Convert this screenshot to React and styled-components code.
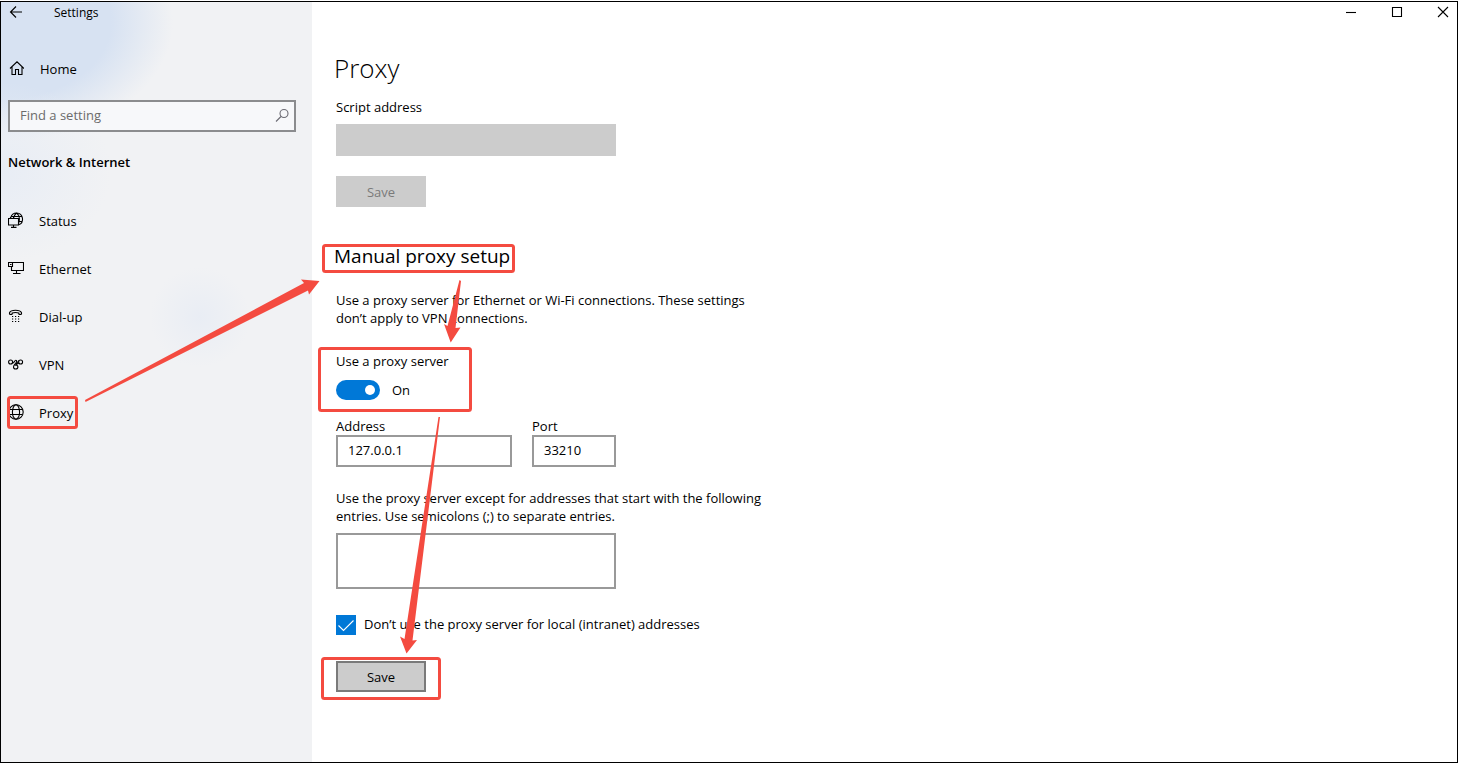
import React from 'react';
import styled, { createGlobalStyle, css } from 'styled-components';

const GlobalStyle = createGlobalStyle`
  * { box-sizing: border-box; }
  body {
    margin: 0;
    padding: 1px 0;
    background: #fff;
    color: #000;
    font: 13px/18px "Open Sans", "Noto Sans", sans-serif;
  }
  button, input, textarea { font: inherit; color: inherit; border-radius: 0; }
  h1, h2, p { margin: 0; }
`;

const Window = styled.div`
  position: relative;
  display: grid;
  grid-template-columns: 311px minmax(0, 1fr);
  min-height: calc(100vh - 2px);
  border: 1px solid #000;
`;

const Sidebar = styled.aside`
  padding: 0 16px 0 7px;
  background:
    radial-gradient(ellipse 50px 50px at 199px 315px, #e9edf4, transparent),
    radial-gradient(ellipse 110px 90px at 0 170px, #e8edf5, transparent),
    radial-gradient(ellipse 172px 120px at 0 20px, #d7e2f2 64%, transparent),
    #f1f2f4;
`;

const TitleBar = styled.header`
  display: flex;
  align-items: flex-start;
  height: 22px;
  font-size: 12px;
  line-height: 22px;
`;

const IconButton = styled.button`
  display: flex;
  align-items: center;
  justify-content: center;
  width: ${(p) => p.$width}px;
  height: 20px;
  padding: 0;
  border: 0;
  background: none;
`;

const AppName = styled.span`
  margin-left: 30px;
`;

const NavLink = styled.a`
  display: flex;
  align-items: center;
  gap: 15px;
  height: 48px;
  color: inherit;
  text-decoration: none;
  > svg { margin-bottom: 2px; }
`;

const HomeLink = styled(NavLink)`
  gap: 16px;
  margin-top: 21px;
`;

const SearchBox = styled.label`
  display: flex;
  align-items: center;
  height: 32px;
  margin-top: 7px;
  padding: 0 4px 2px 10px;
  border: 2px solid #8b8c8e;
  background: #f7f8fa;
`;

const SearchInput = styled.input`
  flex: 1;
  min-width: 0;
  padding: 0;
  border: 0;
  outline: 0;
  background: none;
  &::placeholder { color: #6b6b6b; opacity: 1; }
`;

const Category = styled.h2`
  margin-top: 21px;
  font-size: 13px;
  line-height: 18px;
  font-weight: 600;
`;

const NavList = styled.nav`
  margin-top: 26px;
`;

const Main = styled.main`
  padding-left: 22px;
`;

const MainBar = styled(TitleBar)`
  justify-content: flex-end;
  gap: 18px;
`;

const PageTitle = styled.h1`
  margin-top: 26px;
  font-size: 26px;
  line-height: 36px;
  font-weight: 300;
`;

const Content = styled.form`
  display: flex;
  flex-direction: column;
  align-items: flex-start;
  max-width: 442px;
  padding-left: 2px;
`;

const SectionTitle = styled.h2`
  margin: 35px 0 0 -2px;
  font-size: 19px;
  line-height: 28px;
  font-weight: 400;
`;

const Label = styled.label`
  display: block;
`;

const boxStyle = css`
  display: block;
  width: ${(p) => p.$width}px;
  height: ${(p) => p.$height || 32}px;
  padding: 0 10px 2px;
  border: 2px solid #999;
  background: #fff;
  outline: 0;
  resize: none;
  &:disabled { border-color: #ccc; background: #ccc; }
`;

const TextField = styled.input`${boxStyle}`;
const TextArea = styled.textarea`${boxStyle}`;

const Field = styled.div`
  display: flex;
  flex-direction: column;
  gap: ${(p) => p.$gap || 0}px;
  margin-top: ${(p) => p.$top || 0}px;
`;

const FieldRow = styled.div`
  display: flex;
  gap: 20px;
  margin-top: 17px;
`;

const SaveButton = styled.button`
  width: 90px;
  height: 31px;
  margin-top: ${(p) => p.$top}px;
  padding: 0;
  border: 2px solid #7a7a7a;
  background: #ccc;
  &:disabled { border-color: #ccc; color: #7a7a7a; }
`;

const Paragraph = styled.p`
  margin-top: ${(p) => p.$top}px;
`;

const ToggleRow = styled.label`
  display: flex;
  align-items: center;
  gap: 12px;
`;

const Toggle = styled.input`
  appearance: none;
  display: flex;
  align-items: center;
  justify-content: flex-end;
  width: 44px;
  height: 20px;
  margin: 0;
  padding: 0 5px;
  border-radius: 10px;
  background: #0078d7;
  &::before {
    content: "";
    width: 10px;
    height: 10px;
    border-radius: 50%;
    background: #fff;
  }
  &:not(:checked) { justify-content: flex-start; background: #999; }
`;

const CheckRow = styled.label`
  display: flex;
  align-items: flex-start;
  gap: 8px;
  margin-top: 26px;
`;

const CheckFrame = styled.span`
  display: grid;
  width: 20px;
  height: 20px;
  > * { grid-area: 1 / 1; }
`;

const CheckBox = styled.input`
  appearance: none;
  width: 20px;
  height: 20px;
  margin: 0;
  border: 2px solid #333;
  &:checked { border-color: #0078d7; background: #0078d7; }
  & + svg { pointer-events: none; }
`;

const Annotations = styled.svg`
  position: absolute;
  top: 0;
  left: 0;
  pointer-events: none;
  overflow: visible;
`;

const Icon = ({ size = 16, children, ...rest }) => (
  <svg width={size} height={size} viewBox={`0 0 ${size} ${size}`} fill="none" stroke="#000" strokeWidth="1.1" aria-hidden="true" {...rest}>
    {children}
  </svg>
);

const BackIcon = () => (
  <Icon><path d="M14 8H2.500M8 2.500 2.500 8 8 13.500" /></Icon>
);
const HomeIcon = () => (
  <Icon><path d="M2 8.500 9 1.800l7 6.700M4 7V14.500H7.500V9.500H10.500V14.500H14V7" /></Icon>
);
const SearchIcon = () => (
  <Icon stroke="#6b6b73"><circle cx="10" cy="6.500" r="4" /><path d="M7 9.500 2 14.500" /></Icon>
);
const StatusIcon = () => (
  <Icon>
    <path d="M2.800 5.500C3.500 2.900 5.800 1 8.600 1a6.100 6.100 0 0 1 2 11.800M8.600 1C7 2.200 6.200 3.800 6 5.500M8.600 1c1.800 1.300 2.600 3 2.800 5.500 0 2-.2 3.500-.9 5M3.800 4.500h10M11 9.500h3.400" />
    <path d="M.5 6.500h10v6.500H.5zM5.500 13v2M3 15.400h5.500M2.500 6.500v-1.500M5.500 6.500v-2" />
  </Icon>
);
const EthernetIcon = () => (
  <Icon>
    <path d="M4.500 2.500h11v8h-12V6.500M8.500 10.500v3M5 13.500h7.500M.5 2.500h4v4h-4zM2 4.500h1.500" />
  </Icon>
);
const DialIcon = () => (
  <Icon>
    <path d="M1.500 6V4.800C2.300 3 5 2.300 7.500 2.300s5.200.7 6 2.500V6q-1.500 1-2.700 0V5q-3.300-1-6.600 0v1q-1.200 1-2.700 0z" />
    <path d="M4 8.500h1.200M7 8.500h1.200M10 8.500h1.200M4 11h1.200M7 11h1.200M10 11h1.200M4 13.500h1.200M7 13.500h1.200M10 13.500h1.200" />
  </Icon>
);
const VpnIcon = () => (
  <Icon>
    <circle cx="2.600" cy="6" r="2" /><circle cx="12.600" cy="6" r="2" />
    <path d="M4.300 7C6 7.500 6.500 4.300 7.800 4.300S8.800 6 7.500 7.500 5.500 9.500 5.500 11s1 2 2.200 2 2.200-.8 2.200-2-1-2.300-2.600-1.800" />
    <path d="M10.900 7C8.800 7.800 9 9 6.500 9.200M11 4.500 8 8" />
  </Icon>
);
const GlobeIcon = () => (
  <Icon>
    <circle cx="8" cy="8" r="7.200" /><ellipse cx="8" cy="8" rx="3.600" ry="7.200" />
    <path d="M1.600 5.500h12.800M1.600 10.500h12.800" />
  </Icon>
);

const navItems = [
  ['Status', StatusIcon],
  ['Ethernet', EthernetIcon],
  ['Dial-up', DialIcon],
  ['VPN', VpnIcon],
  ['Proxy', GlobeIcon],
];

export default function App() {
  return (
    <>
      <GlobalStyle />
      <Window>
        <Sidebar>
          <TitleBar>
            <IconButton $width={16} aria-label="Back"><BackIcon /></IconButton>
            <AppName>Settings</AppName>
          </TitleBar>
          <HomeLink href="#home"><HomeIcon />Home</HomeLink>
          <SearchBox>
            <SearchInput type="search" placeholder="Find a setting" aria-label="Find a setting" />
            <SearchIcon />
          </SearchBox>
          <Category>Network &amp; Internet</Category>
          <NavList>
            {navItems.map(([name, Glyph]) => (
              <NavLink key={name} href={`#${name.toLowerCase()}`}><Glyph />{name}</NavLink>
            ))}
          </NavList>
        </Sidebar>
        <Main>
          <MainBar>
            <IconButton $width={28} aria-label="Minimize"><Icon size={12}><path d="M1 6.500h10" /></Icon></IconButton>
            <IconButton $width={28} aria-label="Maximize"><Icon size={12}><path d="M1.500 1.500h9v9h-9z" /></Icon></IconButton>
            <IconButton $width={28} aria-label="Close"><Icon size={12}><path d="m1 1 10 10M11 1 1 11" /></Icon></IconButton>
          </MainBar>
          <PageTitle>Proxy</PageTitle>
          <Content onSubmit={(e) => e.preventDefault()}>
            <Field $top={12} $gap={8}>
              <Label htmlFor="script">Script address</Label>
              <TextField id="script" $width={280} disabled />
            </Field>
            <SaveButton type="button" $top={20} disabled>Save</SaveButton>
            <SectionTitle>Manual proxy setup</SectionTitle>
            <Paragraph $top={21}>
              Use a proxy server for Ethernet or Wi-Fi connections. These settings don’t apply to VPN connections.
            </Paragraph>
            <Field $top={25} $gap={10}>
              <Label htmlFor="use-proxy">Use a proxy server</Label>
              <ToggleRow><Toggle id="use-proxy" type="checkbox" role="switch" defaultChecked />On</ToggleRow>
            </Field>
            <FieldRow>
              <Field>
                <Label htmlFor="address">Address</Label>
                <TextField id="address" $width={176} defaultValue="127.0.0.1" />
              </Field>
              <Field>
                <Label htmlFor="port">Port</Label>
                <TextField id="port" $width={84} defaultValue="33210" />
              </Field>
            </FieldRow>
            <Field $top={22} $gap={8}>
              <Label htmlFor="exceptions">
                Use the proxy server except for addresses that start with the following entries. Use semicolons (;) to separate entries.
              </Label>
              <TextArea id="exceptions" $width={280} $height={56} />
            </Field>
            <CheckRow>
              <CheckFrame>
                <CheckBox type="checkbox" defaultChecked />
                <Icon size={20} stroke="#fff"><path d="m2.500 10.500 5 5 10-10" /></Icon>
              </CheckFrame>
              Don’t use the proxy server for local (intranet) addresses
            </CheckRow>
            <SaveButton $top={26}>Save</SaveButton>
          </Content>
        </Main>
        <Annotations width="520" height="720" viewBox="1 2 520 720" fill="none" aria-hidden="true">
          <g stroke="#f44b40" strokeWidth="3">
            <rect x="8.500" y="397.500" width="68" height="30" rx="2" />
            <rect x="323.500" y="245.500" width="190" height="26" rx="2" />
            <rect x="319.500" y="348.500" width="151" height="62" rx="2" />
            <rect x="322.500" y="658.500" width="117" height="40" rx="2" />
          </g>
          <g fill="#f44b40">
            <path d="M85 400 304 283 301 279.500 319.500 281 309 294.500 308 290.500 85.500 402z" />
            <path d="M459.500 280 447.500 326 444 324 450.700 342.500 460.500 327.500 455.500 328 461 281z" />
            <path d="M438.500 417 404.500 639 400 636.500 406.500 653.500 417 640 412.500 640.500 440 417z" />
          </g>
        </Annotations>
      </Window>
    </>
  );
}
